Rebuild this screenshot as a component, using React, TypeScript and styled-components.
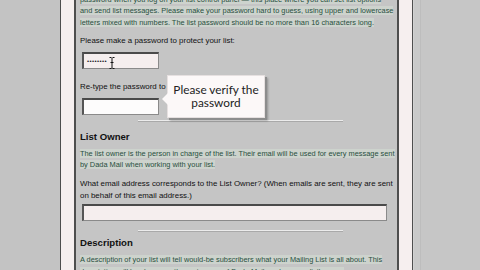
import React from "react";
import styled, { createGlobalStyle } from "styled-components";

const GlobalStyle = createGlobalStyle`
  html, body {
    margin: 0;
    padding: 0;
    width: 480px;
    height: 270px;
    overflow: hidden;
    background: #c3c3c3;
  }
  #root {
    height: 270px;
  }
`;

const Page = styled.div`
  display: flex;
  width: 480px;
  height: 270px;
  overflow: hidden;
  font-family: "Liberation Sans", Arial, sans-serif;
`;

const Gutter = styled.div<{ $w: number; $bg: string }>`
  width: ${(p) => p.$w}px;
  flex: none;
  background: ${(p) => p.$bg};
`;

const Frame = styled.div<{ $side: "left" | "right" }>`
  width: 13px;
  flex: none;
  background: #f6efef;
  border-left: ${(p) => (p.$side === "left" ? "1px" : "2px")} solid #4e4e4e;
  border-right: ${(p) => (p.$side === "left" ? "2px" : "1px")} solid #4e4e4e;
`;

const RightGutter = styled.div`
  flex: 1;
  background: #c6c6c6;
  border-left: 1px solid #d2d2d2;
  box-shadow: inset 6px 0 0 #c9c9c9, inset 7px 0 0 #bdbdbd;
`;

const Content = styled.div`
  width: 321px;
  flex: none;
  background: #c5c5c5;
  padding: 0 4px 0 4px;
  box-sizing: border-box;
  overflow: hidden;
`;

const Note = styled.p<{ $top?: number }>`
  margin: ${(p) => p.$top ?? 0}px 0 0 0;
  font-size: 7.4px;
  line-height: 11.3px;
  color: #284f3d;
  white-space: nowrap;
  span {
    background: rgba(214, 228, 216, 0.45);
  }
`;

const Label = styled.p<{ $top: number }>`
  margin: ${(p) => p.$top}px 0 0 0;
  font-size: 7.9px;
  line-height: 12px;
  color: #111;
  white-space: nowrap;
`;

const Heading = styled.h3<{ $top: number }>`
  margin: ${(p) => p.$top}px 0 0 0;
  font-size: 9.6px;
  line-height: 12px;
  font-weight: bold;
  color: #111;
`;

const Field = styled.div<{ $w: number; $mt?: number; $pink?: boolean }>`
  position: relative;
  margin: ${(p) => p.$mt ?? 5}px 0 0 2px;
  width: ${(p) => p.$w}px;
  height: 17px;
  box-sizing: border-box;
  background: ${(p) => (p.$pink ? "#f5eeee" : "#fdfcfc")};
  border: 1px solid #8a8a8a;
  border-top: 2px solid #4a4a4a;
  border-left: 2px solid #555;
  display: flex;
  align-items: center;
  padding-left: 3px;
  font-size: 6px;
  letter-spacing: 0.4px;
  color: #222;
`;

const Cursor = styled.svg`
  position: absolute;
  left: 25px;
  top: 3px;
`;

const Divider = styled.div<{ $top: number }>`
  margin: ${(p) => p.$top}px 0 0 58px;
  width: 205px;
  height: 1px;
  background: #ececec;
  border-bottom: 1px solid #a9a9a9;
`;

const Row = styled.div`
  position: relative;
`;

const Bubble = styled.div`
  position: absolute;
  left: 87px;
  top: -6px;
  width: 98px;
  height: 43px;
  box-sizing: border-box;
  background: #fcf8f8;
  border: 1px solid #e6e0e0;
  box-shadow: 2px 2px 0 #8d8d8d, 3px 3px 2px rgba(0, 0, 0, 0.25);
  display: flex;
  align-items: center;
  justify-content: center;
  text-align: center;
  font-family: Lato, "Open Sans", sans-serif;
  font-size: 11.8px;
  line-height: 13px;
  color: #222;
  &::before {
    content: "";
    position: absolute;
    left: -6px;
    top: 17px;
    border-top: 6px solid transparent;
    border-bottom: 6px solid transparent;
    border-right: 6px solid #fcf8f8;
  }
`;

const App: React.FC = () => {
  return (
    <Page>
      <GlobalStyle />
      <Gutter $w={60} $bg="#c3c3c3" />
      <Frame $side="left" />
      <Content>
        <Note $top={-6}>
          <span>password when you log on your list control panel — this place where you can set list options</span>
          <br />
          <span>and send list messages. Please make your password hard to guess, using upper and lowercase</span>
          <br />
          <span>letters mixed with numbers. The list password should be no more than 16 characters long.</span>
        </Note>
        <Label $top={7}>Please make a password to protect your list:</Label>
        <Field $w={77} $pink>
          ••••••••
          <Cursor width="6" height="12" viewBox="0 0 6 12">
            <path d="M0.5 0.5h2M3.5 0.5h2M3 1v10M0.5 11.5h2M3.5 11.5h2M1.5 5.5h3" stroke="#111" strokeWidth="1" fill="none" />
          </Cursor>
        </Field>
        <Row>
          <Label $top={12}>Re-type the password to</Label>
          <Bubble>
            Please verify the
            <br />
            password
          </Bubble>
        </Row>
        <Field $w={77} />
        <Divider $top={5} />
        <Heading $top={9}>List Owner</Heading>
        <Note $top={5}>
          <span>The list owner is the person in charge of the list. Their email will be used for every message sent</span>
          <br />
          <span>by Dada Mail when working with your list.</span>
        </Note>
        <Label $top={8}>
          What email address corresponds to the List Owner? (When emails are sent, they are sent
          <br />
          on behalf of this email address.)
        </Label>
        <Field $w={305} $mt={2} $pink />
        <Divider $top={9} />
        <Heading $top={5}>Description</Heading>
        <Note $top={5}>
          <span>A description of your list will tell would-be subscribers what your Mailing List is all about. This</span>
          <br />
          <span>description will be shown on the main page of Dada Mail, and on your list's page.</span>
        </Note>
      </Content>
      <Frame $side="right" />
      <RightGutter />
    </Page>
  );
};

export default App;
